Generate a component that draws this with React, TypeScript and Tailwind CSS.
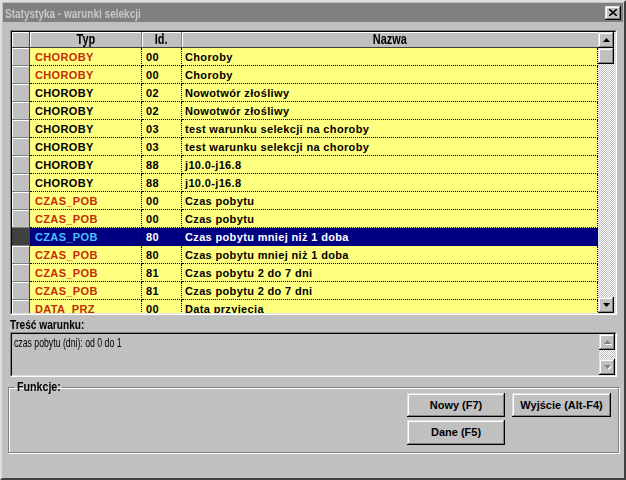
import React from "react";

const RAISED =
  "bg-[#c0c0c0] shadow-[inset_-1px_-1px_#000000,inset_1px_1px_#dfdfdf,inset_-2px_-2px_#808080,inset_2px_2px_#ffffff]";
const CHECKER =
  "bg-[repeating-conic-gradient(#c0c0c0_0%_25%,#ffffff_0%_50%)] bg-[length:2px_2px]";

type Row = { typ: string; id: string; name: string; red: boolean; sel?: boolean };

const rows: Row[] = [
  { typ: "CHOROBY", id: "00", name: "Choroby", red: true },
  { typ: "CHOROBY", id: "00", name: "Choroby", red: true },
  { typ: "CHOROBY", id: "02", name: "Nowotwór złośliwy", red: false },
  { typ: "CHOROBY", id: "02", name: "Nowotwór złośliwy", red: false },
  { typ: "CHOROBY", id: "03", name: "test warunku selekcji na choroby", red: false },
  { typ: "CHOROBY", id: "03", name: "test warunku selekcji na choroby", red: false },
  { typ: "CHOROBY", id: "88", name: "j10.0-j16.8", red: false },
  { typ: "CHOROBY", id: "88", name: "j10.0-j16.8", red: false },
  { typ: "CZAS_POB", id: "00", name: "Czas pobytu", red: true },
  { typ: "CZAS_POB", id: "00", name: "Czas pobytu", red: true },
  { typ: "CZAS_POB", id: "80", name: "Czas pobytu mniej niż 1 doba", red: true, sel: true },
  { typ: "CZAS_POB", id: "80", name: "Czas pobytu mniej niż 1 doba", red: true },
  { typ: "CZAS_POB", id: "81", name: "Czas pobytu 2 do 7 dni", red: true },
  { typ: "CZAS_POB", id: "81", name: "Czas pobytu 2 do 7 dni", red: true },
  { typ: "DATA_PRZ", id: "00", name: "Data przyjęcia", red: true },
];

function Arrow({ up, disabled }: { up: boolean; disabled?: boolean }) {
  return (
    <svg width="7" height="4" viewBox="0 0 7 4" className={disabled ? "drop-shadow-[1px_1px_0_#ffffff]" : ""}>
      <polygon
        points={up ? "3.5,0 7,4 0,4" : "0,0 7,0 3.5,4"}
        fill={disabled ? "#808080" : "#000000"}
      />
    </svg>
  );
}

function ScrollBtn({ up, disabled }: { up: boolean; disabled?: boolean }) {
  return (
    <div className={`h-[16px] w-[16px] flex items-center justify-center ${RAISED}`}>
      <Arrow up={up} disabled={disabled} />
    </div>
  );
}

export default function App() {
  return (
    <div className="w-[626px] h-[480px] bg-[#c0c0c0] border-2 border-t-[#dfdfdf] border-l-[#dfdfdf] border-r-[#404040] border-b-[#404040] flex flex-col font-['Liberation_Sans',sans-serif] overflow-hidden">
      {/* Title bar */}
      <div className="mx-[1px] mt-[1px] h-[19px] bg-[#808080] flex items-center pl-[2px] pr-[2px]">
        <div className="flex-1">
          <span className="inline-block origin-left scale-x-[0.77] text-[13px] font-bold text-[#c8c8c8] whitespace-nowrap">
            Statystyka - warunki selekcji
          </span>
        </div>
        <div className={`w-[16px] h-[14px] flex items-center justify-center ${RAISED}`}>
          <svg width="8" height="7" viewBox="0 0 8 7">
            <path d="M0 0 L8 7 M8 0 L0 7" stroke="#000" strokeWidth="1.6" />
          </svg>
        </div>
      </div>

      {/* Grid */}
      <div className="ml-[8px] mt-[8px] w-[607px] h-[285px] border border-t-[#808080] border-l-[#808080] border-r-white border-b-white">
        <div className="w-full h-full border border-t-black border-l-black border-r-[#dfdfdf] border-b-[#dfdfdf] flex overflow-hidden">
          <div className="flex-1 flex flex-col overflow-hidden">
            {/* header */}
            <div className="flex h-[16px] shrink-0 border-b border-[#404040] text-[14px] font-bold leading-[15px] text-black">
              <div className="w-[18px] border-r border-[#404040] shadow-[inset_1px_1px_#ffffff]" />
              <div className="w-[112px] border-r border-[#808080] flex items-center justify-center shadow-[inset_1px_1px_#ffffff]">
                <span className="inline-block scale-x-[0.78]">Typ</span>
              </div>
              <div className="w-[40px] border-r border-[#808080] flex items-center justify-center shadow-[inset_1px_1px_#ffffff]">
                <span className="inline-block scale-x-[0.78]">Id.</span>
              </div>
              <div className="flex-1 flex items-center justify-center shadow-[inset_1px_1px_#ffffff]">
                <span className="inline-block scale-x-[0.78]">Nazwa</span>
              </div>
            </div>
            {rows.map((r, i) => (
              <div key={i} className="flex h-[18px] shrink-0 text-[11px] font-bold leading-[18px] tracking-[0.35px]">
                <div
                  className={`w-[18px] border-r border-[#404040] border-b border-b-[#808080] ${
                    r.sel ? "bg-[#404040]" : "bg-[#c0c0c0] shadow-[inset_1px_1px_#ffffff]"
                  }`}
                />
                <div
                  className={`w-[112px] pl-[5px] border-r border-b border-dotted border-black ${
                    r.sel ? "bg-[#000080] text-[#48c0ff]" : r.red ? "bg-[#ffff80] text-[#c42c08]" : "bg-[#ffff80] text-black"
                  }`}
                >
                  {r.typ}
                </div>
                <div
                  className={`w-[40px] pl-[4px] border-r border-b border-dotted border-black ${
                    r.sel ? "bg-[#000080] text-white" : "bg-[#ffff80] text-black"
                  }`}
                >
                  {r.id}
                </div>
                <div
                  className={`flex-1 pl-[3px] border-r border-b border-dotted border-black whitespace-nowrap ${
                    r.sel ? "bg-[#000080] text-white" : "bg-[#ffff80] text-black"
                  }`}
                >
                  {r.name}
                </div>
              </div>
            ))}
          </div>
          {/* scrollbar */}
          <div className={`w-[17px] flex flex-col ${CHECKER}`}>
            <ScrollBtn up />
            <div className={`h-[16px] w-[16px] ${RAISED}`} />
            <div className="flex-1" />
            <ScrollBtn up={false} />
          </div>
        </div>
      </div>

      {/* Treść warunku */}
      <div className="ml-[8px] mt-[2px] h-[15px] text-[13px] font-bold leading-[15px] text-black">
        <span className="inline-block origin-left scale-x-[0.78] whitespace-nowrap">Treść warunku:</span>
      </div>
      <div className="ml-[8px] w-[607px] h-[45px] border border-t-[#808080] border-l-[#808080] border-r-white border-b-white">
        <div className="w-full h-full border border-t-black border-l-black border-r-[#dfdfdf] border-b-[#dfdfdf] flex">
          <div className="flex-1 pl-[2px] pt-[1px] text-[13px] leading-[15px] text-black">
            <span className="inline-block origin-left scale-x-[0.67] whitespace-nowrap">czas pobytu (dni): od 0 do 1</span>
          </div>
          <div className={`w-[16px] flex flex-col ${CHECKER}`}>
            <ScrollBtn up disabled />
            <div className="flex-1" />
            <ScrollBtn up={false} disabled />
          </div>
        </div>
      </div>

      {/* Funkcje */}
      <fieldset className="ml-[6px] mt-[3px] w-[611px] h-[73px] border border-[#808080] shadow-[1px_1px_#ffffff,inset_1px_1px_#ffffff] pl-[4px] pr-[7px]">
        <legend className="ml-[2px] px-[2px] text-[13px] font-bold leading-[14px] text-black">
          <span className="inline-block origin-left scale-x-[0.82] whitespace-nowrap -mr-[10px]">Funkcje:</span>
        </legend>
        <div className="flex justify-end -mt-[1px]">
          <div className="grid grid-cols-[98px_99px] gap-x-[7px] gap-y-[3px] text-[11px] font-bold text-black">
            <div className={`h-[24px] flex items-center justify-center ${RAISED}`}>Nowy (F7)</div>
            <div className={`h-[24px] flex items-center justify-center ${RAISED}`}>Wyjście (Alt-F4)</div>
            <div className={`h-[25px] flex items-center justify-center ${RAISED}`}>Dane (F5)</div>
          </div>
        </div>
      </fieldset>
    </div>
  );
}
